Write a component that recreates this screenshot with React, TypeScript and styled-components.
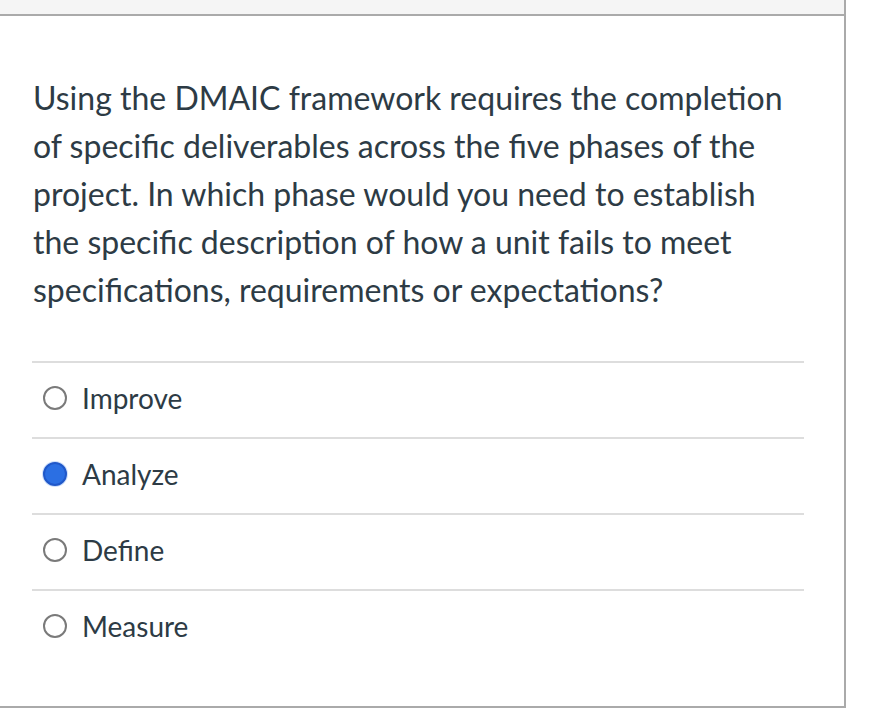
import React from "react";
import styled, { createGlobalStyle } from "styled-components";

const Global = createGlobalStyle`
  html, body { margin: 0; padding: 0; background: #ffffff; }
  body { font-family: Lato, "Open Sans", sans-serif; }
`;

const Card = styled.div`
  width: 844px;
  height: 706px;
  border-right: 2px solid #aaaaaa;
  border-bottom: 2px solid #aaaaaa;
  background: #ffffff;
  display: flex;
  flex-direction: column;
`;

const Header = styled.div`
  height: 14px;
  background: #f5f5f5;
  border-bottom: 2px solid #aaaaaa;
  flex: none;
`;

const Body = styled.div`
  padding: 58px 40px 0 33px;
`;

const Question = styled.p`
  margin: 0;
  font-family: Lato, sans-serif;
  font-size: 32px;
  line-height: 48px;
  color: #2d3b45;
  width: 762px;
`;

const Options = styled.div`
  margin: 47px 0 0 -1px;
  width: 772px;
  display: flex;
  flex-direction: column;
`;

const Option = styled.label`
  display: flex;
  align-items: center;
  gap: 15px;
  padding-left: 11px;
  padding-bottom: 4px;
  box-sizing: border-box;
  border-top: 2px solid #dddddd;
  font-family: Lato, sans-serif;
  font-size: 28px;
  color: #2d3b45;
  height: 76px;
`;

const Radio = styled.span<{ $checked?: boolean }>`
  box-sizing: border-box;
  width: 24px;
  height: 24px;
  border-radius: 50%;
  flex: none;
  border: ${(p) => (p.$checked ? "2px solid #2058c9" : "2px solid #7a7a7a")};
  background: ${(p) => (p.$checked ? "#2b6fe3" : "#ffffff")};
  box-shadow: ${(p) => (p.$checked ? "0 0 0 1px #cfe0fa" : "none")};
`;

const options = ["Improve", "Analyze", "Define", "Measure"];

export default function App() {
  return (
    <>
      <Global />
      <Card>
        <Header />
        <Body>
          <Question>
            Using the DMAIC framework requires the completion of specific
            deliverables across the five phases of the project. In which phase
            would you need to establish the specific description of how a unit
            fails to meet specifications, requirements or expectations?
          </Question>
          <Options>
            {options.map((o) => (
              <Option key={o}>
                <Radio $checked={o === "Analyze"} />
                {o}
              </Option>
            ))}
          </Options>
        </Body>
      </Card>
    </>
  );
}
